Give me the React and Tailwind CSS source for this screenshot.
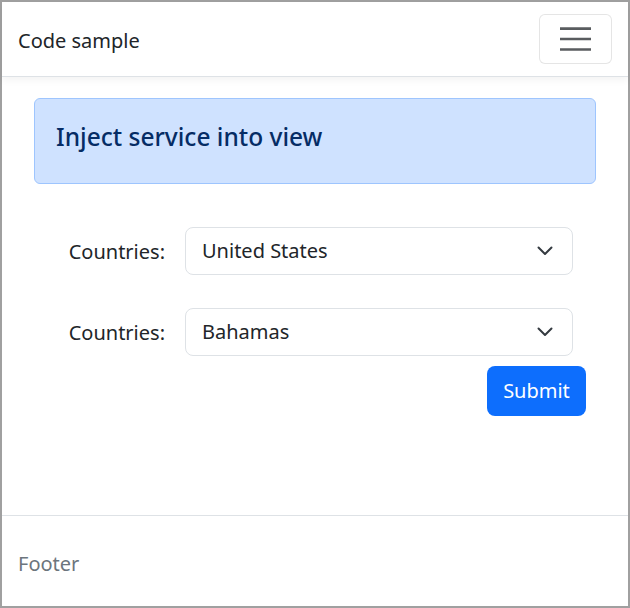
import React from "react";

function Chevron() {
  return (
    <svg width="16" height="10" viewBox="0 0 16 10" fill="none" className="absolute right-[19px] top-1/2 -translate-y-1/2">
      <path d="M1.5 1.5 8 8l6.5-6.5" stroke="#343a40" strokeWidth="2" strokeLinecap="round" strokeLinejoin="round" />
    </svg>
  );
}

function SelectBox({ value }) {
  return (
    <div className="relative ml-[20px] flex h-[48px] w-[388px] items-center rounded-lg border border-[#dee2e6] bg-white pl-[16px] text-[20px] text-[#212529]">
      {value}
      <Chevron />
    </div>
  );
}

export default function App() {
  return (
    <div
      className="flex h-[608px] w-[630px] flex-col border-2 border-[#a0a0a0] bg-white text-[#212529]"
      style={{ fontFamily: '"Noto Sans", "Open Sans", sans-serif' }}
    >
      <header className="relative z-10 flex h-[75px] shrink-0 items-center justify-between border-b border-[#dee2e6] bg-white pl-[16px] pr-[16px] shadow-[0_3px_8px_rgba(0,0,0,0.05)]">
        <span className="pt-[3px] text-[20px] text-[#212529]">Code sample</span>
        <button className="flex h-[50px] w-[73px] items-center justify-center rounded-md border border-black/10 bg-white">
          <svg width="31" height="24" viewBox="0 0 31 24" fill="none">
            <path d="M0 1.6h31M0 12h31M0 22.5h31" stroke="#595c5f" strokeWidth="2.6" />
          </svg>
        </button>
      </header>

      <main className="flex flex-1 flex-col px-[32px]">
        <div className="mt-[21px] flex h-[86px] items-center rounded-md border border-[#9ec5fe] bg-[#cfe2ff] px-[21px] pb-[7px]">
          <h3 className="text-[24.5px] font-medium text-[#052c65]">Inject service into view</h3>
        </div>

        <div className="flex w-[552px] flex-col">
          <div className="mt-[43px] flex items-center">
            <label className="w-[131px] pt-[1px] text-right text-[20px]">Countries:</label>
            <SelectBox value="United States" />
          </div>
          <div className="mt-[33px] flex items-center">
            <label className="w-[131px] pt-[1px] text-right text-[20px]">Countries:</label>
            <SelectBox value="Bahamas" />
          </div>
          <button className="mt-[10px] flex h-[50px] w-[99px] items-center justify-center self-end rounded-lg bg-[#0d6efd] text-[20px] text-white">
            Submit
          </button>
        </div>
      </main>

      <footer className="flex h-[91px] shrink-0 items-center border-t border-[#dee2e6] px-[16px] pt-[5px] text-[20px] text-[#6c757d]">
        Footer
      </footer>
    </div>
  );
}
